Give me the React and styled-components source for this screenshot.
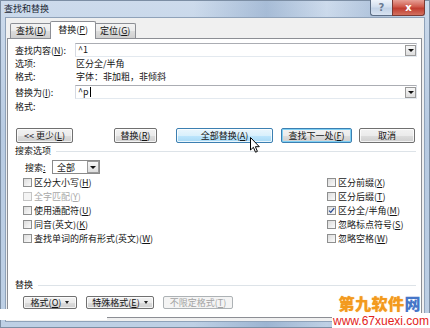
import React from 'react';
import styled, { createGlobalStyle, css } from 'styled-components';

// === Глобальные стили ===
const GlobalStyle = createGlobalStyle`
  html, body {
    margin: 0;
    padding: 0;
    background: #fff;
  }
  body {
    font-family: "Noto Sans CJK SC", "Noto Sans", sans-serif;
  }
`;

// === Окно ===
const Window = styled.div`
  position: relative;
  width: 430px;
  height: 328px;
  box-sizing: border-box;
  padding: 0 5px 6px 5px;
  display: flex;
  flex-direction: column;
  overflow: hidden;
  font-size: 9px;
  color: #151515;
  background:
    linear-gradient(to right, rgba(255,255,255,0) 45%, rgba(70,110,160,0.28) 62%, rgba(255,255,255,0) 76%, rgba(70,110,160,0.22) 88%, rgba(255,255,255,0)),
    linear-gradient(to bottom, #cddbec, #b8cbe2 40%, #bed0e5);
  box-shadow: inset 0 0 0 1px #7c8ea4;
`;

const TitleBar = styled.div`
  flex-shrink: 0;
  height: 17px;
  margin: 0 -5px;
  padding: 0 5px 0 4px;
  display: flex;
  align-items: flex-start;
  justify-content: space-between;
`;

const Title = styled.span`
  font-size: 9px;
  line-height: 17px;
  color: #1b2735;
`;

const Caption = styled.div`
  display: flex;
`;

const CaptionButton = styled.div`
  width: ${p => p.$w}px;
  height: 16px;
  box-sizing: border-box;
  display: flex;
  align-items: center;
  justify-content: center;
  border: 1px solid #5d6e85;
  border-top: none;
  font: bold 10px "DejaVu Sans", sans-serif;
  ${p => p.$close
    ? css`
      background: linear-gradient(#e6a096, #cf5a4c 45%, #c03d30 55%, #d2705f);
      color: #fff;
      border-radius: 0 0 3px 0;
      border-color: #7a3a34;
    `
    : css`
      background: linear-gradient(#eef3fa, #d3dfee 45%, #c2d2e6 55%, #d8e3f1);
      color: #6a7a92;
      border-radius: 0 0 0 3px;
      border-right: none;
    `}
`;

// === Клиентская область ===
const Client = styled.div`
  flex: 1;
  min-height: 0;
  display: flex;
  flex-direction: column;
  background: #f0f0f0;
  border: 1px solid #8fa2b9;
  padding: 3px 2px 3px 1px;
`;

const TabStrip = styled.div`
  display: flex;
  align-items: flex-end;
  height: 18px;
  padding-left: 3px;
  margin-bottom: -1px;
  position: relative;
  z-index: 1;
`;

const Tab = styled.div`
  box-sizing: border-box;
  height: ${p => (p.$active ? 18 : 15)}px;
  margin: 0 ${p => (p.$active ? -2 : 0)}px ${p => (p.$active ? 0 : 1)}px;
  padding: 0 ${p => (p.$active ? 7 : 5)}px;
  border: 1px solid #8c8e94;
  border-bottom: none;
  border-radius: 2px 2px 0 0;
  line-height: ${p => (p.$active ? 15 : 13)}px;
  position: relative;
  z-index: ${p => (p.$active ? 2 : 1)};
  background: ${p => (p.$active
    ? '#fff'
    : 'linear-gradient(#f3f3f3, #ebebeb 50%, #dddddd 51%, #cfcfcf)')};
`;

const Panel = styled.div`
  flex: 1;
  display: flex;
  flex-direction: column;
  background: #fff;
  border: 1px solid #8c8e94;
  padding: 4px 4px 0 7px;
`;

const U = styled.span`
  text-decoration: underline;
`;

// === Поля ===
const FieldRow = styled.div`
  display: flex;
  align-items: center;
  height: ${p => p.$h || 13}px;
  margin-top: ${p => p.$mt || 0}px;
`;

const FieldLabel = styled.span`
  width: 60px;
  flex-shrink: 0;
  line-height: 13px;
`;

const FieldValue = styled.span`
  padding-left: 1px;
  line-height: 13px;
`;

const Combo = styled.div`
  flex: 1;
  height: 14px;
  box-sizing: border-box;
  display: flex;
  align-items: center;
  border: 1px solid;
  border-color: #abadb3 #dfe3ea #e3e9ef #d6dae2;
  background: #fff;
  padding-left: 2px;
  line-height: 12px;
`;

const Caret = styled.span`
  display: inline-block;
  width: 1px;
  height: 10px;
  background: #000;
  margin-left: 1px;
`;

const DropButton = styled.span`
  margin-left: auto;
  width: ${p => p.$size || 11}px;
  height: ${p => p.$size || 11}px;
  box-sizing: border-box;
  border: 1px solid #9a9a9a;
  background: linear-gradient(#f7f7f7, #dedede);
  display: flex;
  align-items: center;
  justify-content: center;
  &::after {
    content: '';
    border-left: 3px solid transparent;
    border-right: 3px solid transparent;
    border-top: 3px solid #111;
  }
`;

// === Кнопки ===
const ButtonRow = styled.div`
  display: flex;
  align-items: center;
  margin-top: ${p => p.$mt}px;
  padding-left: ${p => p.$pl || 0}px;
`;

const Button = styled.div`
  box-sizing: border-box;
  width: ${p => p.$w}px;
  height: ${p => p.$h || 15}px;
  margin-left: ${p => p.$ml || 0}px;
  display: flex;
  align-items: center;
  justify-content: center;
  border: 1px solid #707070;
  border-radius: 2px;
  line-height: 12px;
  background: linear-gradient(#f2f2f2, #ebebeb 50%, #dddddd 51%, #cfcfcf);
  box-shadow: inset 0 0 0 1px rgba(255,255,255,0.75);
  ${p => p.$hover && css`
    border-color: #3c7fb1;
    background: linear-gradient(#eaf6fd, #d9f0fc 50%, #bee6fd 51%, #a7d9f5);
  `}
  ${p => p.$default && css`
    border-color: #3c7fb1;
    box-shadow: inset 0 0 0 1px #7fd0f4;
  `}
  ${p => p.$disabled && css`
    border-color: #adb2b5;
    background: #f4f4f4;
    color: #a3a3a3;
    box-shadow: none;
  `}
`;

const Arrow = styled.span`
  margin-left: 4px;
  border-left: 2.5px solid transparent;
  border-right: 2.5px solid transparent;
  border-top: 3px solid #222;
`;

// === Разделы ===
const SectionHeader = styled.div`
  display: flex;
  align-items: center;
  height: 12px;
  margin-top: ${p => p.$mt}px;
  line-height: 12px;
  &::after {
    content: '';
    flex: 1;
    margin: 0 1px 0 5px;
    border-top: 1px solid #dde3e8;
  }
`;

const SearchRow = styled.div`
  display: flex;
  align-items: center;
  margin-top: 3px;
  padding-left: 10px;
  height: 14px;
`;

const SearchLabel = styled.span`
  width: 27px;
`;

const Select = styled.div`
  width: 48px;
  height: 14px;
  box-sizing: border-box;
  border: 1px solid #8a8a8a;
  display: flex;
  align-items: center;
  padding-left: 4px;
  background: #fff;
`;

const CheckGrid = styled.div`
  display: grid;
  grid-template-columns: 304px 1fr;
  grid-template-rows: repeat(5, 14px);
  grid-auto-flow: column;
  margin-top: 1px;
  padding-left: 8px;
`;

const CheckItem = styled.div`
  display: flex;
  align-items: center;
  gap: 2px;
  color: ${p => (p.$disabled ? '#a8a8a8' : 'inherit')};
`;

const Box = styled.span`
  width: 9px;
  height: 9px;
  box-sizing: border-box;
  border: 1px solid ${p => (p.$disabled ? '#c4c4c4' : '#8e8f8f')};
  background: ${p => (p.$disabled ? '#f4f4f4' : 'linear-gradient(135deg, #dcdcdc, #fbfbfb)')};
  display: flex;
  align-items: center;
  justify-content: center;
`;

// === Водяной знак и наложения ===
const Smudge = styled.div`
  position: absolute;
  left: 0;
  top: 309px;
  width: 107px;
  height: 11px;
  background: #fff;
`;

const Pointer = styled.svg`
  position: absolute;
  left: 250px;
  top: 137px;
`;

const Logo = styled.div`
  position: absolute;
  right: 9px;
  bottom: 17px;
  font-size: 16px;
  font-weight: 900;
  line-height: 16px;
  letter-spacing: 0.5px;
  color: #f39a1e;
  text-shadow: 0 0 1px #f7b04a;
`;

const LogoBlue = styled.span`
  color: #4676c8;
  text-shadow: none;
`;

const UrlBox = styled.div`
  position: absolute;
  right: 0;
  bottom: 0;
  width: 98px;
  height: 15px;
  background: #fff;
  display: flex;
  align-items: center;
  justify-content: center;
  font: 12px "Liberation Sans", sans-serif;
  color: #e3231b;
`;

const Check = ({ children, checked, disabled }) => (
  <CheckItem $disabled={disabled}>
    <Box $disabled={disabled}>
      {checked && (
        <svg width="7" height="7" viewBox="0 0 7 7">
          <path d="M1 3.6 L2.8 5.4 L6.2 1.2" fill="none" stroke="#2b4c93" strokeWidth="1.3" />
        </svg>
      )}
    </Box>
    <span>{children}</span>
  </CheckItem>
);

export default function App() {
  return (
    <>
      <GlobalStyle />
      <Window>
        <TitleBar>
          <Title>查找和替换</Title>
          <Caption>
            <CaptionButton $w={22}>?</CaptionButton>
            <CaptionButton $w={33} $close>x</CaptionButton>
          </Caption>
        </TitleBar>

        <Client>
          <TabStrip>
            <Tab>查找(<U>D</U>)</Tab>
            <Tab $active>替换(<U>P</U>)</Tab>
            <Tab>定位(<U>G</U>)</Tab>
          </TabStrip>

          <Panel>
            <FieldRow $h={14}>
              <FieldLabel>查找内容(<U>N</U>):</FieldLabel>
              <Combo>
                ^1
                <DropButton />
              </Combo>
            </FieldRow>
            <FieldRow>
              <FieldLabel>选项:</FieldLabel>
              <FieldValue>区分全/半角</FieldValue>
            </FieldRow>
            <FieldRow>
              <FieldLabel>格式:</FieldLabel>
              <FieldValue>字体：非加粗，非倾斜</FieldValue>
            </FieldRow>
            <FieldRow $h={14} $mt={2}>
              <FieldLabel>替换为(<U>I</U>):</FieldLabel>
              <Combo>
                ^p<Caret />
                <DropButton />
              </Combo>
            </FieldRow>
            <FieldRow $mt={1}>
              <FieldLabel>格式:</FieldLabel>
            </FieldRow>

            <ButtonRow $mt={15}>
              <Button $w={57} $ml={1}>&lt;&lt; 更少(<U>L</U>)</Button>
              <Button $w={43} $ml={41}>替换(<U>R</U>)</Button>
              <Button $w={97} $ml={19} $hover>全部替换(<U>A</U>)</Button>
              <Button $w={71} $ml={8} $default>查找下一处(<U>F</U>)</Button>
              <Button $w={56} $ml={7}>取消</Button>
            </ButtonRow>

            <SectionHeader $mt={2}>搜索选项</SectionHeader>
            <SearchRow>
              <SearchLabel>搜索<U>:</U></SearchLabel>
              <Select>
                全部
                <DropButton $size={12} />
              </Select>
            </SearchRow>

            <CheckGrid>
              <Check>区分大小写(<U>H</U>)</Check>
              <Check disabled>全字匹配(<U>Y</U>)</Check>
              <Check>使用通配符(<U>U</U>)</Check>
              <Check>同音(英文)(<U>K</U>)</Check>
              <Check>查找单词的所有形式(英文)(<U>W</U>)</Check>
              <Check>区分前缀(<U>X</U>)</Check>
              <Check>区分后缀(<U>T</U>)</Check>
              <Check checked>区分全/半角(<U>M</U>)</Check>
              <Check>忽略标点符号(<U>S</U>)</Check>
              <Check>忽略空格(<U>W</U>)</Check>
            </CheckGrid>

            <SectionHeader $mt={34}>替换</SectionHeader>
            <ButtonRow $mt={5} $pl={8}>
              <Button $w={54} $h={13}>格式(<U>O</U>)<Arrow /></Button>
              <Button $w={68} $h={13} $ml={9}>特殊格式(<U>E</U>)<Arrow /></Button>
              <Button $w={70} $h={13} $ml={9} $disabled>不限定格式(<U>T</U>)</Button>
            </ButtonRow>
          </Panel>
        </Client>

        <Smudge />
        <Pointer width="12" height="17" viewBox="0 0 12 17">
          <path d="M0.5 0.5 L0.5 13 L3.4 10.3 L5.5 15.2 L7.4 14.4 L5.4 9.7 L9.3 9.7 Z" fill="#fff" stroke="#000" strokeWidth="1" />
        </Pointer>
        <Logo>第九软件<LogoBlue>网</LogoBlue></Logo>
        <UrlBox>www.67xuexi.com</UrlBox>
      </Window>
    </>
  );
}
